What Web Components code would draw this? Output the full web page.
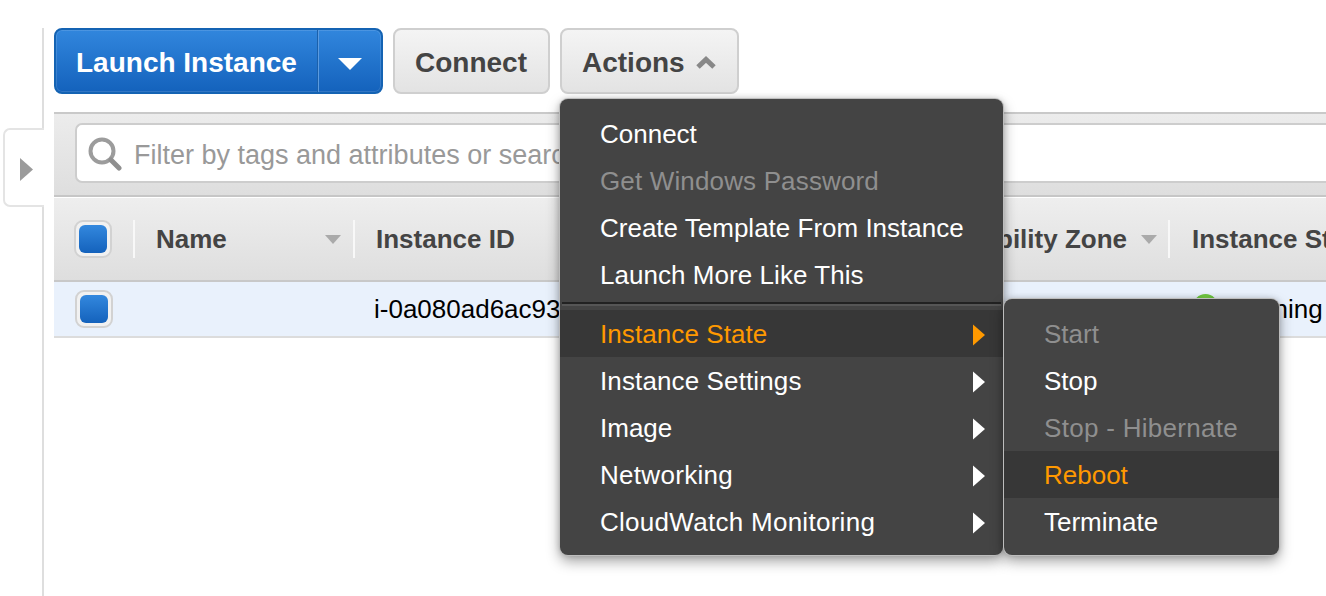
<!DOCTYPE html>
<html><head><meta charset="utf-8"><title>Instances</title>
<style>
html,body{margin:0;padding:0;height:100%;overflow:hidden;background:#fff}
body{font-family:"Liberation Sans",Arial,sans-serif;font-size:27px;color:#000}
ec2-page{height:596px}
</style></head><body>
<ec2-page></ec2-page>
<script>
function def(name,css,html){
  customElements.define(name,class extends HTMLElement{
    constructor(){super();const r=this.attachShadow({mode:'open'});
      r.innerHTML='<style>'+css+'</style>'+(typeof html==='function'?html(this):html);}
  });
}
const caretR='<svg width="13" height="23" viewBox="0 0 13 23" style="display:block"><path d="M0 0L13 11.5L0 23Z" fill="currentColor"/></svg>';

def('ec2-rail',`
:host{display:flex;flex-direction:column;width:41px;margin:28px 0 0 3px;flex:none}
.line{margin-left:auto;width:2px;background:#dedede}
.top{height:100px}.bot{flex:1}
.tab{height:79px;box-sizing:border-box;width:41px;border:2px solid #e4e4e4;border-right:0;border-radius:7px 0 0 7px;background:#fff;display:flex;align-items:center;padding:3px 0 0 15px;color:#9b9b9b}
`,`<div class="line top"></div><div class="tab">${caretR}</div><div class="line bot"></div>`);

def('ec2-button',`
:host{display:block;height:66px;box-sizing:border-box;border:2px solid #cfcfcf;border-radius:8px;background:linear-gradient(#f4f4f4,#e3e3e3);color:#444;font-weight:700;font-size:28px;line-height:62px;padding:2px 20px 0;white-space:nowrap}
.in{display:flex;align-items:center;gap:11px}
`,`<div class="in"><slot></slot><slot name="icon"></slot></div>`);

def('ec2-split',`
:host{display:flex;height:66px;box-sizing:border-box;width:329px;border:2px solid #1463b3;border-radius:8px;background:linear-gradient(#3186dd,#1462bc);box-shadow:inset 0 0 0 1px rgba(255,255,255,.13);color:#fff;font-weight:700;font-size:28px;line-height:62px}
.main{width:262px;box-sizing:border-box;padding:2px 0 0 20px;white-space:nowrap;border-right:1px solid #1b60aa;box-shadow:1px 0 0 #5b9be0}
.drop{flex:1;display:flex;align-items:center;justify-content:center;padding-top:6px}
`,`<div class="main"><slot></slot></div><div class="drop"><svg width="24" height="12" viewBox="0 0 24 12"><path d="M0 0H24L12 12Z" fill="#fff"/></svg></div>`);

def('ec2-filter',`
:host{display:block;box-sizing:border-box;height:85px;border-top:2px solid #c9c9c9;border-bottom:2px solid #c6c6c6;background:linear-gradient(#ececec,#dedede);padding:9px 0 10px 21px}
.box{height:60px;box-sizing:border-box;border:2px solid #cdcdcd;border-right:0;border-radius:7px 0 0 7px;background:#fff;display:flex;align-items:center;padding-left:9px;gap:12px;color:#999;font-size:27px;white-space:nowrap;overflow:hidden}
svg{flex:none}
.t{padding-top:4px}
`,`<div class="box"><svg width="36" height="36" viewBox="0 0 36 36"><circle cx="16" cy="16" r="11.5" fill="none" stroke="#9c9c9c" stroke-width="4"/><path d="M25 25L33 33" stroke="#8f8f8f" stroke-width="5" stroke-linecap="round"/></svg><span class="t"><slot></slot></span></div>`);

def('ec2-check',`
:host{display:block;width:38px;height:38px;box-sizing:border-box;border:2px solid #d2d2d2;border-radius:9px;background:#f1f1f1;padding:3px}
.b{height:100%;border-radius:6px;background:linear-gradient(#3388de,#1462bc)}
`,`<div class="b"></div>`);

const cols='81px 220px 360px 455px 1fr';
def('ec2-thead',`
:host{display:grid;grid-template-columns:${cols};height:84px;box-sizing:border-box;margin-top:1px;background:linear-gradient(#eeeeee,#dedede);border-bottom:2px solid #c8c8c8;color:#444;font-weight:700;font-size:26px;align-items:center;white-space:nowrap;overflow:hidden}
`,`<slot></slot>`);
def('ec2-th',`
:host{display:flex;align-items:center;height:38px;box-sizing:border-box;padding-left:21px;padding-right:12px;border-right:2px solid #f8f8f8;overflow:hidden}
:host([chk]){padding-left:20px}
:host([end]){justify-content:flex-end;padding-right:11px}
:host([last]){border-right:0;overflow:visible;padding-left:22px}
.txt{flex:none}
.sp{flex:1}
:host([end]) .sp{display:none}
.arrow{flex:none;margin-left:14px;width:0;height:0;border:8px solid transparent;border-top:9px solid #aaa;border-bottom:0}
`,h=>`<span class="txt"><slot></slot></span>`+(h.hasAttribute('sort')?`<span class="sp"></span><span class="arrow"></span>`:''));
def('ec2-tr',`
:host{display:grid;grid-template-columns:${cols};height:56px;box-sizing:border-box;background:#e9f1fc;border-bottom:2px solid #dcdcdc;align-items:center;font-size:26px;white-space:nowrap;overflow:hidden;color:#000}
`,`<slot></slot>`);
def('ec2-td',`
:host{display:flex;align-items:center;padding-left:19px;overflow:hidden}
:host([chk]){padding-left:21px}
.dot{display:none}
:host([run]){padding-left:23px;gap:18px;overflow:visible}
:host([run]) .dot{display:block;flex:none;width:25px;height:25px;margin-top:-6px;border-radius:50%;background:radial-gradient(circle at 50% 30%,#86d850,#3fa71f)}
`,`<span class="dot"></span><slot></slot>`);

def('ec2-menu',`
:host{position:absolute;display:block;box-sizing:border-box;background:#444;border-radius:8px;box-shadow:0 0 0 1px #bdbdbd,0 6px 14px rgba(0,0,0,.38),0 0 6px rgba(0,0,0,.2);color:#fff;font-size:26px;font-weight:400;z-index:5;line-height:47px;white-space:nowrap}
:host([root]){left:0;top:71px;width:443px;height:456px;padding:11px 0 0}
:host([sub]){left:444px;top:-11px;width:275px;height:256px;padding:11px 0 0;z-index:6}
`,`<slot></slot>`);
def('ec2-item',`
:host{display:flex;position:relative;box-sizing:border-box;align-items:center;height:47px;padding:2px 18px 0 40px;color:#fff}
:host([disabled]){color:#8f8f8f}
:host([hot]){background:#373737;color:#ff9900}
.sp{flex:1}
.c{display:none}
:host([more]) .c{display:block}
`,`<span><slot></slot></span><span class="sp"></span><span class="c">${caretR.replace('width="13" height="23"','width="12" height="22"')}</span><slot name="sub"></slot>`);
def('ec2-sep',`
:host{display:block;height:12px;box-sizing:border-box;padding:4px 2px 0}
div{height:2px;background:#222;border-bottom:2px solid #565656}
`,`<div></div>`);

def('ec2-page',`
:host{display:flex;width:1326px;overflow:hidden}
main{flex:1;min-width:0;padding:28px 0 0 10px;display:flex;flex-direction:column}
.bar{display:flex;gap:10px;margin-bottom:18px}
.actions{position:relative}
svg{display:block}
`,`
<ec2-rail></ec2-rail>
<main>
 <div class="bar">
  <ec2-split>Launch Instance</ec2-split>
  <ec2-button style="padding-right:21px">Connect</ec2-button>
  <div class="actions">
   <ec2-button style="padding-right:21px">Actions<svg slot="icon" width="20" height="13" viewBox="0 0 20 13" style="display:block;margin-top:-2px"><path d="M2 11L10 3.500L18 11" fill="none" stroke="#888" stroke-width="5"/></svg></ec2-button>
   <ec2-menu root>
    <ec2-item>Connect</ec2-item>
    <ec2-item disabled style="letter-spacing:.15px">Get Windows Password</ec2-item>
    <ec2-item>Create Template From Instance</ec2-item>
    <ec2-item style="letter-spacing:.05px">Launch More Like This</ec2-item>
    <ec2-sep></ec2-sep>
    <ec2-item hot more style="letter-spacing:.08px">Instance State
      <ec2-menu sub slot="sub" style="letter-spacing:0">
       <ec2-item disabled>Start</ec2-item>
       <ec2-item>Stop</ec2-item>
       <ec2-item disabled style="letter-spacing:.3px">Stop - Hibernate</ec2-item>
       <ec2-item hot>Reboot</ec2-item>
       <ec2-item>Terminate</ec2-item>
      </ec2-menu>
    </ec2-item>
    <ec2-item more style="letter-spacing:.12px">Instance Settings</ec2-item>
    <ec2-item more>Image</ec2-item>
    <ec2-item more style="letter-spacing:.3px">Networking</ec2-item>
    <ec2-item more style="letter-spacing:.28px">CloudWatch Monitoring</ec2-item>
   </ec2-menu>
  </div>
 </div>
 <ec2-filter>Filter by tags and attributes or search</ec2-filter>
 <ec2-thead>
  <ec2-th chk><ec2-check></ec2-check></ec2-th>
  <ec2-th sort>Name</ec2-th>
  <ec2-th>Instance ID</ec2-th>
  <ec2-th sort end>Availability Zone</ec2-th>
  <ec2-th last>Instance State</ec2-th>
 </ec2-thead>
 <ec2-tr>
  <ec2-td chk><ec2-check></ec2-check></ec2-td>
  <ec2-td></ec2-td>
  <ec2-td>i-0a080ad6ac93</ec2-td>
  <ec2-td></ec2-td>
  <ec2-td run>running</ec2-td>
 </ec2-tr>
</main>`);
</script>
</body></html>
